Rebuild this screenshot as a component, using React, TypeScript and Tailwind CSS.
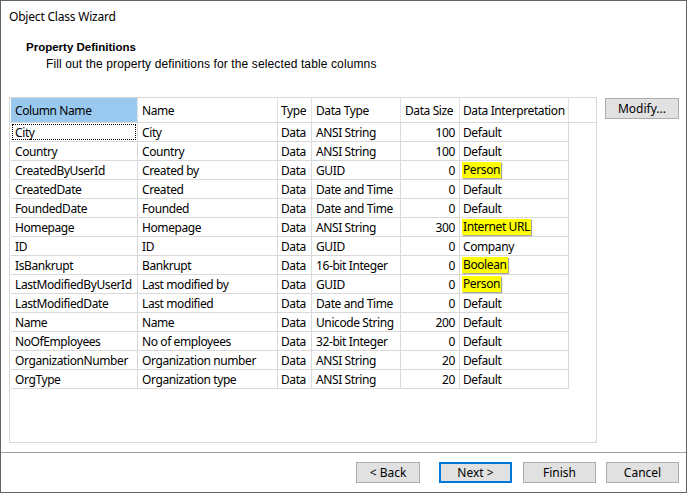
import React from "react";

type Row = [string, string, string, string, number, string, boolean];

const rows: Row[] = [
  ["City", "City", "Data", "ANSI String", 100, "Default", false],
  ["Country", "Country", "Data", "ANSI String", 100, "Default", false],
  ["CreatedByUserId", "Created by", "Data", "GUID", 0, "Person", true],
  ["CreatedDate", "Created", "Data", "Date and Time", 0, "Default", false],
  ["FoundedDate", "Founded", "Data", "Date and Time", 0, "Default", false],
  ["Homepage", "Homepage", "Data", "ANSI String", 300, "Internet URL", true],
  ["ID", "ID", "Data", "GUID", 0, "Company", false],
  ["IsBankrupt", "Bankrupt", "Data", "16-bit Integer", 0, "Boolean", true],
  ["LastModifiedByUserId", "Last modified by", "Data", "GUID", 0, "Person", true],
  ["LastModifiedDate", "Last modified", "Data", "Date and Time", 0, "Default", false],
  ["Name", "Name", "Data", "Unicode String", 200, "Default", false],
  ["NoOfEmployees", "No of employees", "Data", "32-bit Integer", 0, "Default", false],
  ["OrganizationNumber", "Organization number", "Data", "ANSI String", 20, "Default", false],
  ["OrgType", "Organization type", "Data", "ANSI String", 20, "Default", false],
];

const seg = { fontFamily: '"Noto Sans", "Open Sans", sans-serif' };
const arial = { fontFamily: '"Liberation Sans", Arial, sans-serif' };

function Btn({ children, w, primary }: { children: React.ReactNode; w: string; primary?: boolean }) {
  return (
    <div
      className={`${w} h-[21px] flex items-center justify-center bg-[#e1e1e1] text-[12px] text-black ${
        primary ? "border-2 border-[#0078d7]" : "border border-[#adadad]"
      }`}
      style={seg}
    >
      {children}
    </div>
  );
}

export default function App() {
  return (
    <div className="w-[687px] h-[493px] border border-[#646464] bg-white flex flex-col text-black overflow-hidden">
      <div className="pl-[8px] pt-[7px] h-[18px] text-[12px] leading-[18px] tracking-[-0.2px]" style={seg}>
        Object Class Wizard
      </div>
      <div className="pl-[25px] pt-[21px] text-[11.5px] leading-[14px] font-bold" style={arial}>
        Property Definitions
      </div>
      <div className="pl-[45px] pt-[3px] text-[12px] leading-[14px] tracking-[0.12px]" style={arial}>
        Fill out the property definitions for the selected table columns
      </div>
      <div className="flex mt-[26px] ml-[8px]">
        <div className="w-[588px] h-[346px] border border-[#d6d6d6] pl-[1px]">
          <div className="flex h-[25px] border-b border-[#d9d9d9] text-[12px] tracking-[-0.4px]" style={seg}>
            <div className="w-[127px] bg-[#99c9ef] flex items-center pt-[1px] pl-[4px] border-r border-[#e3e3e3]">Column Name</div>
            <div className="w-[140px] flex items-center pt-[1px] pl-[4px] border-r border-[#e3e3e3]">Name</div>
            <div className="w-[34px] flex items-center pt-[1px] pl-[3px] border-r border-[#e3e3e3]">Type</div>
            <div className="w-[89px] flex items-center pt-[1px] pl-[4px] border-r border-[#e3e3e3]">Data Type</div>
            <div className="w-[59px] flex items-center pt-[1px] pl-[4px] border-r border-[#e3e3e3]">Data Size</div>
            <div className="w-[109px] flex items-center pt-[1px] pl-[3px] border-r border-[#e3e3e3]">Data Interpretation</div>
          </div>
          {rows.map((r, i) => (
            <div key={i} className="flex h-[19px] text-[12px] leading-[18px] tracking-[-0.4px]" style={seg}>
              <div className="w-[127px] border-r border-b border-[#d9d9d9] relative pl-[4px] pt-[1px]">
                {i === 0 && (
                  <div className="absolute left-[1px] top-[1px] right-[1px] bottom-[1px] border border-dotted border-black" />
                )}
                {r[0]}
              </div>
              <div className="w-[140px] border-r border-b border-[#d9d9d9] pl-[4px] pt-[1px]">{r[1]}</div>
              <div className="w-[34px] border-r border-b border-[#d9d9d9] pl-[3px] pt-[1px]">{r[2]}</div>
              <div className="w-[89px] border-r border-b border-[#d9d9d9] pl-[4px] pt-[1px]">{r[3]}</div>
              <div className="w-[59px] border-r border-b border-[#d9d9d9] pr-[4px] pt-[1px] text-right">{r[4]}</div>
              <div className="w-[109px] border-r border-b border-[#d9d9d9] pl-[2px]">
                {r[6] ? (
                  <span className="inline-block mt-[1px] bg-[#ffff00] px-[1px] leading-[16px] shadow-[1px_1px_1px_rgba(0,0,0,0.35)]">
                    {r[5]}
                  </span>
                ) : (
                  <span className="inline-block pt-[1px] px-[1px]">{r[5]}</span>
                )}
              </div>
            </div>
          ))}
        </div>
        <div className="ml-[8px] mt-[1px]">
          <Btn w="w-[74px]">Modify...</Btn>
        </div>
      </div>
      <div className="mt-[9px] border-t border-[#a0a0a0] flex-1 flex justify-end items-start pt-[9px] pr-[7px]">
        <Btn w="w-[64px]">&lt; Back</Btn>
        <div className="ml-[19px]"><Btn w="w-[73px]" primary>Next &gt;</Btn></div>
        <div className="ml-[11px]"><Btn w="w-[73px]">Finish</Btn></div>
        <div className="ml-[10px]"><Btn w="w-[73px]">Cancel</Btn></div>
      </div>
    </div>
  );
}
